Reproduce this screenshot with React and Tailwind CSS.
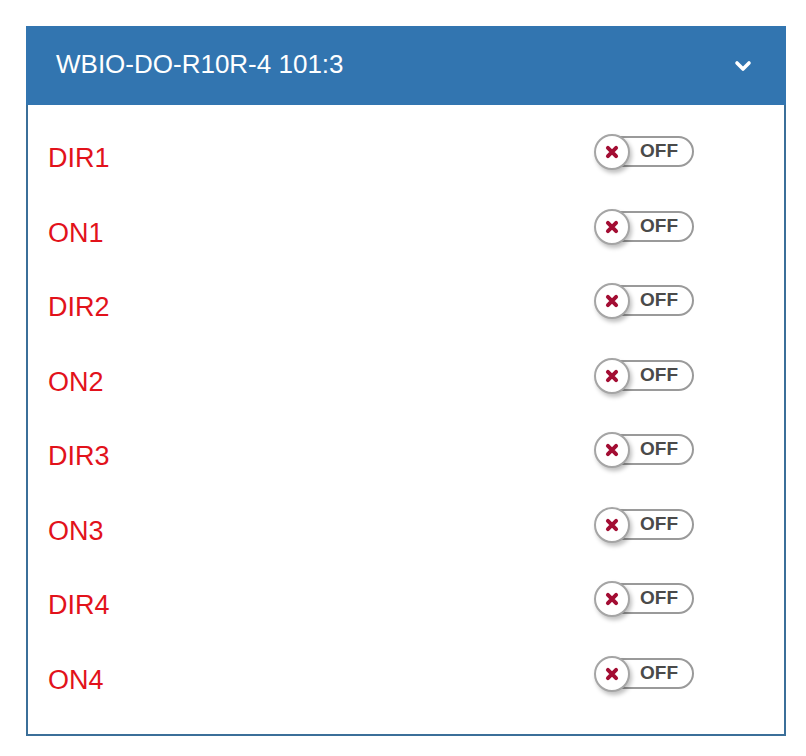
import React from 'react'

const canaux = ['DIR1', 'ON1', 'DIR2', 'ON2', 'DIR3', 'ON3', 'DIR4', 'ON4']

function Interrupteur() {
  return (
    <div className="relative w-[100px] h-9 mb-3 flex items-center">
      <div className="absolute left-2 right-0 top-[2px] h-[31px] rounded-full border-2 border-[#9a9a9a] bg-white" />
      <span className="absolute left-[46px] top-[7px] text-[19px] font-bold text-[#4a4a4a] leading-5">OFF</span>
      <div className="absolute left-0 top-0 w-9 h-9 rounded-full border-2 border-[#a5a5a5] bg-white shadow-[2px_3px_4px_rgba(0,0,0,0.25)] flex items-center justify-center">
        <svg width="14" height="14" viewBox="0 0 12 12">
          <path d="M2.5 2.5 L9.5 9.5 M9.5 2.5 L2.5 9.5" stroke="#a30d33" strokeWidth="3.4" strokeLinecap="round" />
        </svg>
      </div>
    </div>
  )
}

export default function App() {
  return (
    <div className="min-h-screen bg-white pt-[26px] pl-[26px]" style={{ fontFamily: '"Liberation Sans", Arial, sans-serif' }}>
      <div className="w-[760px] border-2 border-t-0 border-[#3b6f99] bg-white">
        <div className="h-[79px] -mx-[2px] bg-[#3275b0] flex items-center justify-between pl-[30px] pr-[34px]">
          <h1 className="text-[26px] text-white font-normal leading-8 -mt-1">WBIO-DO-R10R-4 101:3</h1>
          <svg width="18" height="14" viewBox="0 0 18 14">
            <path d="M3 4 L9 10 L15 4" fill="none" stroke="white" strokeWidth="3.6" strokeLinecap="round" strokeLinejoin="round" />
          </svg>
        </div>
        <div className="pt-4 pb-[17px]">
          {canaux.map(nom => (
            <div key={nom} className="h-[74.5px] flex items-center pl-5">
              <span className="w-[546px] text-[27px] leading-8 text-[#e2121b]">{nom}</span>
              <Interrupteur />
            </div>
          ))}
        </div>
      </div>
    </div>
  )
}
